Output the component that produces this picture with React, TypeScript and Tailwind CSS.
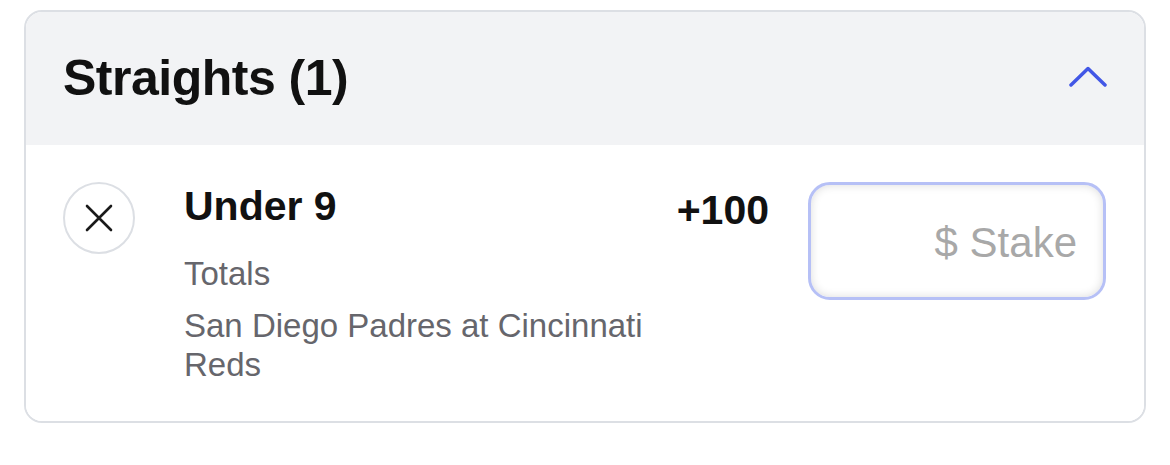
import { useState } from "react";

export default function App() {
  const [open, setOpen] = useState(true);
  const [stake, setStake] = useState("");

  return (
    <div className="min-h-screen bg-white pl-[24px] pr-[24px] pt-[10px]" style={{ fontFamily: '"Liberation Sans", Arial, sans-serif' }}>
      <div className="w-[1122px] rounded-[18px] border-2 border-[#dcdfe4] overflow-hidden">
        <div className="flex h-[133px] items-center justify-between bg-[#f2f3f5] pl-[37px] pr-[36px]">
          <h2 className="text-[50px] font-bold leading-none tracking-[-0.5px] text-[#111111] pb-[2px]">Straights (1)</h2>
          <button onClick={() => setOpen(!open)} className="flex h-[40px] w-[40px] items-center justify-center pb-[4px]">
            <svg width="38" height="21" viewBox="0 0 38 21" fill="none">
              <path d="M2 19 L19 2.5 L36 19" stroke="#4257e6" strokeWidth="3.5" strokeLinecap="round" strokeLinejoin="round" />
            </svg>
          </button>
        </div>

        {open && (
          <div className="flex items-start h-[276px] bg-white pl-[37px] pr-[38px] pt-[37px]">
            <button className="flex h-[72px] w-[72px] shrink-0 items-center justify-center rounded-full border-2 border-[#dcdfe4]">
              <svg width="28" height="28" viewBox="0 0 28 28" fill="none">
                <path d="M2 2 L26 26 M26 2 L2 26" stroke="#1a1a1a" strokeWidth="2.6" strokeLinecap="round" />
              </svg>
            </button>

            <div className="ml-[49px] w-[480px] shrink-0">
              <div className="text-[41px] font-bold leading-[48px] text-[#111111] mt-0">Under 9</div>
              <div className="mt-[24px] text-[33px] leading-[39px] text-[#66666c]">Totals</div>
              <div className="mt-[13px] text-[33px] leading-[39px] text-[#66666c]">San Diego Padres at Cincinnati Reds</div>
            </div>

            <div className="w-[105px] shrink-0 text-right text-[41px] font-bold leading-[48px] text-[#111111] mt-[4px]">+100</div>

            <input
              value={stake}
              onChange={e => setStake(e.target.value)}
              placeholder="$ Stake"
              className="ml-[39px] mt-0 h-[118px] w-[298px] rounded-[22px] border-[3px] border-[#b6c0f6] bg-white pr-[26px] pt-[4px] text-right text-[42px] text-[#111111] placeholder:text-[#a8a8a8] shadow-[inset_0_0_10px_rgba(0,0,0,0.14)] outline-none"
            />
          </div>
        )}
      </div>
    </div>
  );
}
